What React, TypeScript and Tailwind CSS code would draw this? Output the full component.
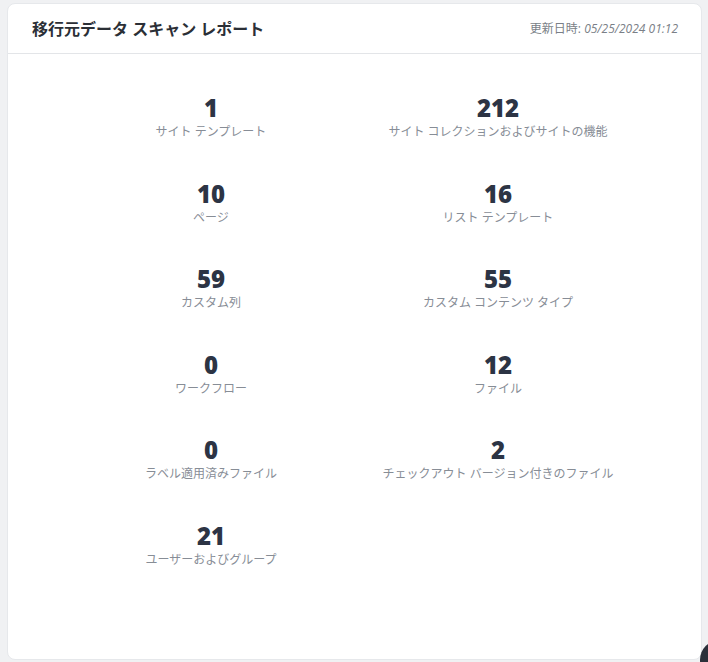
const STATS = [
  { value: "1", label: "サイト テンプレート" },
  { value: "212", label: "サイト コレクションおよびサイトの機能" },
  { value: "10", label: "ページ" },
  { value: "16", label: "リスト テンプレート" },
  { value: "59", label: "カスタム列" },
  { value: "55", label: "カスタム コンテンツ タイプ" },
  { value: "0", label: "ワークフロー" },
  { value: "12", label: "ファイル" },
  { value: "0", label: "ラベル適用済みファイル" },
  { value: "2", label: "チェックアウト バージョン付きのファイル" },
  { value: "21", label: "ユーザーおよびグループ" },
];

export default function App() {
  return (
    <div
      className="relative h-[662px] overflow-hidden bg-[#f0f1f3] pt-[3px] pl-[7px] pr-[6px]"
      style={{ fontFamily: '"Open Sans", "Noto Sans CJK JP", sans-serif' }}
    >
      <div className="h-[657px] rounded-lg bg-white border border-[#e6e8eb] flex flex-col">
        {/* Header */}
        <div className="h-[50px] flex items-center justify-between pl-[24px] pr-[23px] border-b border-[#e3e5e8]">
          <h1 className="text-[16px] font-bold text-[#2b2f36]">移行元データ スキャン レポート</h1>
          <div className="text-[12px] text-[#7a7f87]">
            更新日時: <span className="italic">05/25/2024 01:12</span>
          </div>
        </div>

        {/* Stats */}
        <div className="pt-[40px]">
          <div className="w-[574px] mx-auto grid grid-cols-2 gap-y-[38.6px]">
            {STATS.map((s, i) => (
              <div key={i} className="flex flex-col items-center">
                <div className="text-[24px] leading-[28px] font-extrabold text-[#2c3444]">{s.value}</div>
                <div className="mt-[1px] text-[12px] leading-[18px] text-[#878d96]">{s.label}</div>
              </div>
            ))}
          </div>
        </div>
      </div>

      {/* floating button peeking at the corner */}
      <div className="absolute right-[-32px] bottom-[-18px] w-[40px] h-[40px] rounded-full bg-[#2b303a]" />
    </div>
  );
}
